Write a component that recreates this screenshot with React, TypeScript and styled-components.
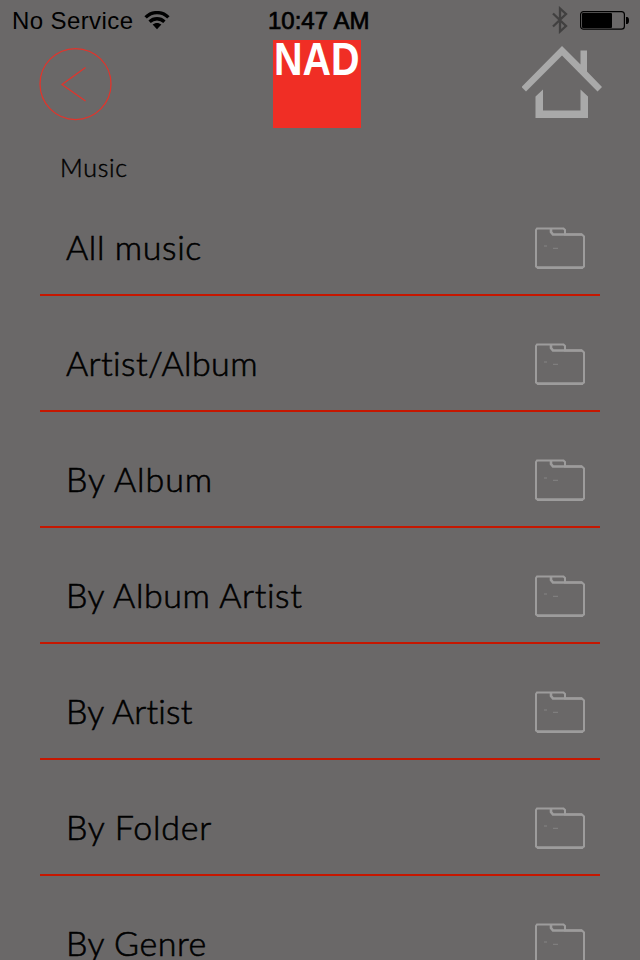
import React from "react";
import styled, { createGlobalStyle } from "styled-components";

const GlobalStyle = createGlobalStyle`
  * { box-sizing: border-box; }
  html, body { margin: 0; padding: 0; background: #6a6868; overflow: hidden; }
`;

const Screen = styled.div`
  width: 640px;
  height: 960px;
  overflow: hidden;
  display: flex;
  flex-direction: column;
  background: #6a6868;
  color: #000;
  font-family: Lato, "Open Sans", sans-serif;
`;

const StatusBar = styled.header`
  height: 40px;
  flex: none;
  display: grid;
  grid-template-columns: 268px 104px 1fr;
  align-items: center;
  font-family: "Liberation Sans", Arial, sans-serif;
  font-size: 24px;
  line-height: 42px;
  white-space: nowrap;
`;

const Carrier = styled.div`
  display: flex;
  align-items: center;
  padding-left: 12px;
  gap: 11px;
`;

const CarrierName = styled.span`
  width: 121px;
  letter-spacing: 0.4px;
`;

const Clock = styled.time`
  -webkit-text-stroke: 0.7px #000;
`;

const Indicators = styled.div`
  display: flex;
  justify-content: flex-end;
  align-items: center;
  gap: 12px;
  padding: 0 11px 2px 0;
`;

const NavBar = styled.nav`
  height: 100px;
  flex: none;
  display: flex;
  justify-content: space-between;
  align-items: flex-start;
  padding: 0 37px 0 39px;
`;

const NavButton = styled.button<{ $top: number }>`
  border: 0;
  padding: 0;
  background: none;
  display: block;
  margin-top: ${(p) => p.$top}px;
`;

const Logo = styled.div`
  width: 88px;
  height: 88px;
  padding-left: 1px;
  background: #f02e25;
  margin-right: 2px;
`;

const LogoText = styled.div`
  width: 100px;
  font: bold 47px/37px "Liberation Sans", Arial, sans-serif;
  color: #fff;
  transform: scaleX(0.84);
  transform-origin: 0 0;
  white-space: nowrap;
`;

const Heading = styled.h1`
  margin: 0;
  height: 40px;
  flex: none;
  padding: 7px 0 0 60px;
  font-size: 25px;
  font-weight: 300;
  -webkit-text-stroke: 0.45px #000;
  line-height: 40px;
  letter-spacing: 0.7px;
`;

const List = styled.ul`
  list-style: none;
  margin: 0 40px;
  padding: 0;
`;

const Row = styled.li`
  height: 116px;
  display: flex;
  justify-content: space-between;
  align-items: flex-start;
  padding: 46px 14px 0 26px;
  border-bottom: 2px solid #c51700;
`;

const Label = styled.span<{ $spacing: number }>`
  font-size: 34px;
  font-weight: 300;
  -webkit-text-stroke: 0.6px #000;
  line-height: 42px;
  letter-spacing: ${(p) => p.$spacing}px;
  white-space: nowrap;
`;

const WifiIcon = () => (
  <svg width="26" height="20" viewBox="0 0 26 20" fill="none" stroke="#000" strokeWidth="3.400">
    <path d="M1.600 6.400C8 0 18 0 24.400 6.400" />
    <path d="M5.600 10.700C9.800 6.700 16.200 6.700 20.400 10.700" />
    <path d="M8.600 13.600C11.200 11.400 14.800 11.400 17.400 13.600L13 18.200Z" fill="#000" stroke="none" />
  </svg>
);

const BluetoothIcon = () => (
  <svg width="16" height="28" viewBox="0 0 16 28" fill="none" stroke="#414040" strokeWidth="2.3">
    <path d="M1 7.5L14 20L8 25.5V2.5L14 8L1 20.5" />
  </svg>
);

const BatteryIcon = () => (
  <svg width="49" height="20" viewBox="0 0 49 20">
    <rect x="0.6" y="1.6" width="43.8" height="17.6" rx="3" fill="none" stroke="#000" strokeWidth="1.2" />
    <rect x="2" y="3" width="30" height="15" rx="1" fill="#000" />
    <path d="M46 7h1c1.4 0 2 1.2 2 3.5S48.400 14 47 14h-1z" fill="#000" />
  </svg>
);

const BackIcon = () => (
  <svg width="74" height="74" viewBox="0 0 74 74" fill="none" stroke="#e2342b" strokeWidth="1.25">
    <circle cx="36.500" cy="37" r="35.500" />
    <path d="M46.500 20.500L23 37.500L46.500 54" />
  </svg>
);

const HomeIcon = () => (
  <svg width="81" height="74" viewBox="0 0 81 74" fill="#a9a9a9">
    <path d="M40 0L58.500 18.500V4.500H65V25.500L80 41L75.500 45.500L40 9.500L4 45.500L-0.500 41Z" />
    <path d="M13.500 50.500L21 43.500V64.500H58.500V43.500L66 50.500V72H13.500Z" />
  </svg>
);

const FolderIcon = () => (
  <svg width="52" height="44" viewBox="0 0 52 44" fill="none" stroke="#9d9c9c" strokeWidth="2">
    <path d="M3 2.500H29.500L31 4V8.500H48L50 10.500V40.500L48 42H4L2 40.500V4Z" />
    <path d="M17 3V6L19 8.500H48M3 41.500H49" strokeWidth="2.600" />
    <path d="M10 20H13M19 22.300H24" stroke="#858484" strokeWidth="1" />
  </svg>
);

const folders = [
  { name: "All music", spacing: 0.6 },
  { name: "Artist/Album", spacing: 0.42 },
  { name: "By Album", spacing: 0.9 },
  { name: "By Album Artist", spacing: 0.6 },
  { name: "By Artist", spacing: 0.2 },
  { name: "By Folder", spacing: 0.75 },
  { name: "By Genre", spacing: 0.55 },
];

export default function App() {
  return (
    <>
      <GlobalStyle />
      <Screen>
        <StatusBar>
          <Carrier>
            <CarrierName>No Service</CarrierName>
            <WifiIcon />
          </Carrier>
          <Clock>10:47 AM</Clock>
          <Indicators>
            <BluetoothIcon />
            <BatteryIcon />
          </Indicators>
        </StatusBar>
        <NavBar>
          <NavButton $top={7} aria-label="Back"><BackIcon /></NavButton>
          <Logo><LogoText>NAD</LogoText></Logo>
          <NavButton $top={6} aria-label="Home"><HomeIcon /></NavButton>
        </NavBar>
        <Heading>Music</Heading>
        <List>
          {folders.map((f) => (
            <Row key={f.name}>
              <Label $spacing={f.spacing}>{f.name}</Label>
              <FolderIcon />
            </Row>
          ))}
        </List>
      </Screen>
    </>
  );
}
